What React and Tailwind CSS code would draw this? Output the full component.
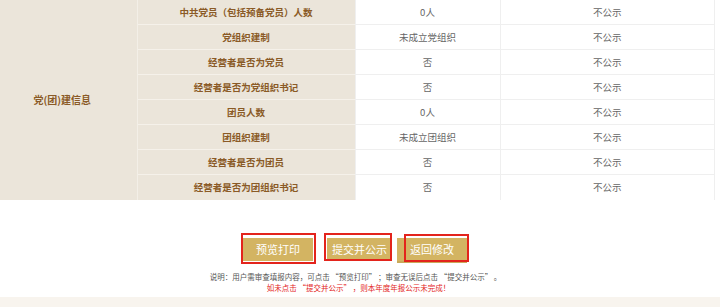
import React from 'react'

const rows = [
  ['中共党员（包括预备党员）人数', '0人', '不公示'],
  ['党组织建制', '未成立党组织', '不公示'],
  ['经营者是否为党员', '否', '不公示'],
  ['经营者是否为党组织书记', '否', '不公示'],
  ['团员人数', '0人', '不公示'],
  ['团组织建制', '未成立团组织', '不公示'],
  ['经营者是否为团员', '否', '不公示'],
  ['经营者是否为团组织书记', '否', '不公示'],
]

function Btn({ label, w, box }) {
  return (
    <div className={`relative ${w}`}>
      <button className="w-full h-[23px] bg-[#d3b462] text-white text-[11px] leading-[23px] text-center">
        {label}
      </button>
      <div className={`absolute border-2 border-[#e3241c] ${box}`} />
    </div>
  )
}

export default function App() {
  return (
    <div className="w-[720px] h-[307px] overflow-hidden bg-white font-['Noto_Sans_CJK_SC','Noto_Sans',sans-serif]">
      <table className="w-[715px] -mt-px border-collapse table-fixed">
        <colgroup>
          <col className="w-[137px]" />
          <col className="w-[218px]" />
          <col className="w-[145px]" />
          <col />
        </colgroup>
        <tbody>
          {rows.map((r, i) => (
            <tr key={i} className="h-[25px]">
              {i === 0 && (
                <td rowSpan={8} className="bg-[#ebe5da] border-r border-[#f3efe7] text-center align-middle pr-[12px] text-[10px] font-bold text-[#8a5a26]">
                  党(团)建信息
                </td>
              )}
              <td className="bg-[#ebe5da] border-t border-[#f5f1ea] text-center text-[9.5px] font-bold text-[#8a5a26] p-0">
                {r[0]}
              </td>
              <td className="border-t border-l border-[#efefef] text-center text-[9.5px] text-[#666] p-0">{r[1]}</td>
              <td className="border-t border-l border-r border-[#efefef] text-center text-[9.5px] text-[#666] p-0">{r[2]}</td>
            </tr>
          ))}
        </tbody>
      </table>

      <div className="w-[715px] h-[97px] flex flex-col items-center pt-[35px]">
        <div className="flex items-start pr-[5px]">
          <Btn label="预览打印" w="w-[70px] border-l-[5px] border-white box-content -ml-[5px]" box="-left-[2px] -right-[3px] -top-[2px] -bottom-[3px]" />
          <div className="w-[14px]" />
          <Btn label="提交并公示" w="w-[65px]" box="-left-[3px] right-0 -top-[2px] bottom-0" />
          <div className="w-[5px]" />
          <Btn label="返回修改" w="w-[70px] shadow-[0_2px_0_#c9a95a]" box="left-[7px] -right-[2px] -top-px -bottom-px" />
        </div>
        <p className="mt-[10px] pr-[4px] text-[7.5px] leading-[11px] text-[#555] text-center">
          说明：用户需审查填报内容，可点击 “预览打印” ；审查无误后点击 “提交并公示” 。
        </p>
        <p className="pl-[2px] text-[7.5px] leading-[11px] text-[#e3241c] text-center">
          如未点击 “提交并公示” ，则本年度年报公示未完成！
        </p>
      </div>
      <div className="h-[10px] bg-[#f8f4ee]" />
    </div>
  )
}
